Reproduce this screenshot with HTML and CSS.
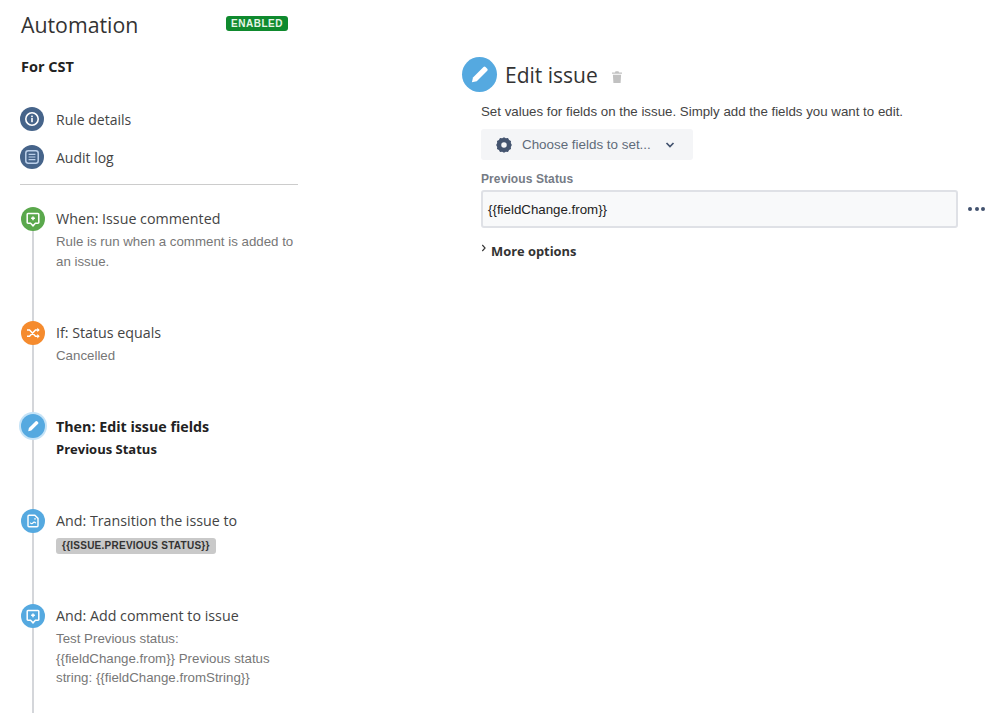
FILE: index.html
```html
<!DOCTYPE html>
<html lang="en">
<head>
<meta charset="utf-8">
<title>Automation</title>
<link rel="stylesheet" href="styles.css">
</head>
<body>
<div class="page">
  <aside class="side">
    <div class="head">
      <h1>Automation</h1>
      <span class="lozenge">ENABLED</span>
    </div>
    <div class="rule-name">For CST</div>
    <nav class="nav">
      <div class="nav-item">
        <span class="dot navy"><svg viewBox="0 0 24 24" class="ico"><circle cx="12" cy="12" r="6.2" fill="none" stroke="#fff" stroke-width="1.6"/><rect x="11.2" y="11" width="1.6" height="4.2" fill="#fff"/><rect x="11.2" y="8.6" width="1.6" height="1.6" fill="#fff"/></svg></span>
        <span>Rule details</span>
      </div>
      <div class="nav-item">
        <span class="dot navy"><svg viewBox="0 0 24 24" class="ico"><rect x="5.8" y="5.8" width="12.4" height="12.4" rx="2.4" fill="none" stroke="#bcd0ea" stroke-width="1.5"/><path d="M8.6 9.4h6.8M8.6 12h6.8M8.6 14.6h6.8" stroke="#bcd0ea" stroke-width="1.2"/></svg></span>
        <span>Audit log</span>
      </div>
    </nav>
    <div class="timeline">
      <span class="line"></span>
      <div class="step s1">
        <span class="dot green"><svg viewBox="0 0 24 24" class="ico"><path d="M7 6.5h10a.8.8 0 0 1 .8.8v8.2a.8.8 0 0 1-.8.8h-2.600L12 18.800l-2.400-2.500H7a.8.8 0 0 1-.8-.8V7.300a.8.8 0 0 1 .8-.8z" fill="none" stroke="#fff" stroke-width="1.500"/><path d="M12 9.400v3.800M10.100 11.300h3.800" stroke="#fff" stroke-width="1.500"/></svg></span>
        <div class="body">
          <div class="title">When: Issue commented</div>
          <div class="desc">Rule is run when a comment is added to an issue.</div>
        </div>
      </div>
      <div class="step s2">
        <span class="dot orange"><svg viewBox="0 0 24 24" class="ico"><path d="M6 9h2.500l6 6.200H18M6 15.200h2.500l6-6.200H18" fill="none" stroke="#fff" stroke-width="1.500"/><path d="M16.300 6.800l2.400 2.200-2.400 2.200zM16.300 13l2.400 2.200-2.400 2.200z" fill="#fff"/></svg></span>
        <div class="body">
          <div class="title">If: Status equals</div>
          <div class="desc">Cancelled</div>
        </div>
      </div>
      <div class="step s3">
        <span class="dot blue active"><svg viewBox="0 0 24 24" class="ico"><path d="M7.200 17.200l.7-3.100 6.800-6.800a1 1 0 0 1 1.400 0l1 1a1 1 0 0 1 0 1.400l-6.800 6.800z" fill="#fff"/></svg></span>
        <div class="body">
          <div class="title strong">Then: Edit issue fields</div>
          <div class="sub">Previous Status</div>
        </div>
      </div>
      <div class="step s4">
        <span class="dot blue"><svg viewBox="0 0 24 24" class="ico"><path d="M8 6.200h5.800L17 9.400v7.400a1 1 0 0 1-1 1H8a1 1 0 0 1-1-1V7.200a1 1 0 0 1 1-1z" fill="none" stroke="#fff" stroke-width="1.400"/><path d="M9.300 13.600c.5 1.400 2 1.400 2.700.3s2.200-1 2.700.3M13.200 9.800h1.600" fill="none" stroke="#fff" stroke-width="1.200"/></svg></span>
        <div class="body">
          <div class="title">And: Transition the issue to</div>
          <span class="tag">{{ISSUE.PREVIOUS STATUS}}</span>
        </div>
      </div>
      <div class="step s5">
        <span class="dot blue"><svg viewBox="0 0 24 24" class="ico"><path d="M7 6.500h10a.8.8 0 0 1 .8.8v8.200a.8.8 0 0 1-.8.8h-2.600L12 18.800l-2.400-2.500H7a.8.8 0 0 1-.8-.8V7.300a.8.8 0 0 1 .8-.8z" fill="none" stroke="#fff" stroke-width="1.500"/><path d="M12 9.400v3.800M10.100 11.300h3.800" stroke="#fff" stroke-width="1.500"/></svg></span>
        <div class="body">
          <div class="title">And: Add comment to issue</div>
          <div class="desc">Test Previous status: {{fieldChange.from}} Previous status string: {{fieldChange.fromString}}</div>
        </div>
      </div>
    </div>
  </aside>
  <main class="main">
    <div class="edit-head">
      <span class="big-dot"><svg viewBox="0 0 36 36" class="big-ico"><path d="M10.200 26l1.100-5 10.800-10.800a1.500 1.500 0 0 1 2.100 0l1.800 1.800a1.500 1.500 0 0 1 0 2.100L15.200 24.900z" fill="#fff"/></svg></span>
      <h2>Edit issue</h2>
      <svg viewBox="0 0 12 14" class="trash"><path d="M4.500 1.200h3l.5 1.200h3v1.300H1V2.400h3zM1.900 4.800h8.200l-.5 8.200H2.400z" fill="#c1c1c1"/></svg>
    </div>
    <div class="form">
      <p class="intro">Set values for fields on the issue. Simply add the fields you want to edit.</p>
      <div class="choose">
        <svg viewBox="0 0 24 24" class="gear"><path d="M12 2.600l2.200 1.300 2.600-.2 1.300 2.200 2.300 1.200-.2 2.600L21.400 12l-1.200 2.300.2 2.600-2.300 1.200-1.300 2.200-2.600-.2L12 21.400l-2.200-1.300-2.600.2-1.300-2.200-2.300-1.200.2-2.600L2.600 12l1.200-2.300-.2-2.600 2.300-1.200 1.300-2.200 2.600.2zM12 8.700a3.300 3.300 0 1 0 0 6.600 3.300 3.300 0 0 0 0-6.600z" fill="#44546f" fill-rule="evenodd"/></svg>
        <span class="choose-text">Choose fields to set...</span>
        <svg viewBox="0 0 10 6" class="chev"><path d="M1.500 1l3.500 3.500L8.500 1" fill="none" stroke="#42526e" stroke-width="1.700"/></svg>
      </div>
      <label class="field-label">Previous Status</label>
      <div class="field-row">
        <div class="input">{{fieldChange.from}}</div>
        <span class="dots"><i></i><i></i><i></i></span>
      </div>
      <div class="more">
        <svg viewBox="0 0 6 8" class="more-chev"><path d="M1.300 1l2.800 3-2.800 3" fill="none" stroke="#333" stroke-width="1.100"/></svg>
        <span>More options</span>
      </div>
    </div>
  </main>
</div>
</body>
</html>
```
FILE: styles.css
```css
* { box-sizing: border-box; }
html, body { margin: 0; padding: 0; background: #fff; }
body {
  width: 999px;
  height: 713px;
  overflow: hidden;
  color: #333;
  font-family: "Open Sans", "Noto Sans", sans-serif;
}
.page { display: flex; height: 713px; overflow: hidden; }

.side { width: 278px; margin-left: 20px; flex: none; }
.head { display: flex; align-items: flex-start; justify-content: space-between; padding: 12px 10px 0 1px; height: 57px; }
h1 { margin: 0; font-size: 21.3px; line-height: 26px; font-weight: 400; color: #333; }
.lozenge {
  margin-top: 4px;
  width: 62px;
  height: 15px;
  border-radius: 3px;
  background: #0f8a2e;
  color: #e6f5e8;
  font: 700 10px/15px "Liberation Sans", sans-serif;
  letter-spacing: .5px;
  text-align: center;
}
.rule-name { padding-left: 1px; font-size: 14.5px; line-height: 20px; font-weight: 700; color: #222; height: 50px; }

.nav { display: flex; flex-direction: column; gap: 14px; border-bottom: 1px solid #ccc; padding-bottom: 15px; }
.nav-item { display: flex; align-items: center; gap: 12px; height: 24px; font-size: 14px; color: #444; }

.dot { flex: none; width: 24px; height: 24px; border-radius: 50%; display: block; }
.ico { display: block; width: 24px; height: 24px; }
.navy { background: #46648a; }
.green { background: #5aa84c; }
.orange { background: #f58b2e; }
.blue { background: #55a9e0; }
.active { box-shadow: 0 0 0 2px #c5e3f7; }

.timeline { position: relative; padding-top: 22px; margin-left: 1px; }
.line { position: absolute; left: 11px; top: 34px; bottom: -200px; width: 2px; background: #d4d6da; }
.step { position: relative; display: flex; gap: 11px; }
.s1 { height: 114px; }
.s2 { height: 93px; }
.s3 { height: 95px; }
.s4 { height: 95px; }
.body { width: 240px; }
.title { font-size: 14.25px; line-height: 24px; color: #444; }
.title.strong { font-weight: 700; color: #222; line-height: 26px; }
.desc { font: 13.3px/19.5px "Liberation Sans", sans-serif; color: #777; margin-top: 1px; }
.sub { font-size: 13px; line-height: 20px; margin-top: -1px; font-weight: 700; color: #222; }
.tag {
  display: block;
  width: fit-content;
  margin-top: 5px;
  height: 16px;
  padding: 0 6px;
  border-radius: 3px;
  background: #c9c9c9;
  color: #333;
  font: 700 10px/16px "Liberation Sans", sans-serif;
  letter-spacing: .25px;
}

.main { margin-left: 164px; padding-top: 57px; flex: 1; min-width: 0; }
.edit-head { display: flex; align-items: center; height: 35px; }
.big-dot { flex: none; width: 35px; height: 35px; border-radius: 50%; background: #55a9e0; }
.big-ico { display: block; width: 35px; height: 35px; }
h2 { margin: 2px 0 0 8px; font-size: 21px; line-height: 35px; font-weight: 400; color: #333; }
.trash { width: 12px; height: 14px; margin-left: 13px; margin-top: 4px; }

.form { padding-left: 19px; }
.intro { margin: 11px 0 0; font: 13.3px/18px "Liberation Sans", sans-serif; color: #444; }
.choose {
  display: flex;
  align-items: center;
  width: 212px;
  height: 31px;
  margin-top: 8px;
  padding-left: 13px;
  border-radius: 3px;
  background: #f4f5f7;
}
.gear { width: 20px; height: 20px; flex: none; }
.choose-text { margin-left: 8px; font: 13.4px/20px "Liberation Sans", sans-serif; color: #5f6b7a; }
.chev { width: 10px; height: 6px; margin-left: 14px; }
.field-label { display: block; margin-top: 11px; font: 700 12px/16px "Liberation Sans", sans-serif; color: #757b85; letter-spacing: .1px; }
.field-row { display: flex; align-items: center; margin-top: 3px; }
.input {
  width: 477px;
  height: 38px;
  padding-left: 5px;
  border: 2px solid #dfe1e6;
  border-radius: 3px;
  background: #f8f9fa;
  font: 13.3px/36px "Liberation Sans", sans-serif;
  color: #222;
}
.dots { display: flex; gap: 2.500px; margin-left: 10px; }
.dots i { width: 4px; height: 4px; border-radius: 50%; background: #42526e; }
.more { display: flex; align-items: flex-start; margin-top: 13px; height: 20px; }
.more-chev { width: 6px; height: 8px; margin-top: 3px; }
.more span { margin-left: 4px; font-size: 12.9px; line-height: 20px; font-weight: 700; color: #333; }
```
